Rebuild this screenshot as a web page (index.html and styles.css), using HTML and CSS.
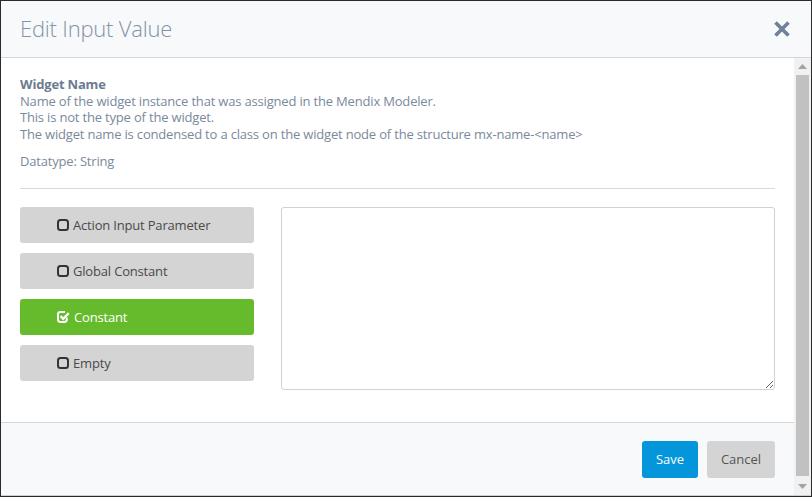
FILE: index.html
```html
<!DOCTYPE html>
<html>
<head>
<meta charset="utf-8">
<link rel="stylesheet" href="styles.css">
</head>
<body>
<div class="modal">
  <div class="modal-header">
    <h1 class="title">Edit Input Value</h1>
    <button class="close" aria-label="Close">
      <svg width="18" height="18" viewBox="0 0 18 18"><path d="M2.5 2.5 L15.5 15.5 M15.5 2.5 L2.5 15.5" stroke="#6e8197" stroke-width="3.6" stroke-linecap="butt" fill="none"/></svg>
    </button>
  </div>
  <div class="main">
    <div class="scroller">
      <div class="modal-body">
        <p class="desc"><strong>Widget Name</strong><br>Name of the widget instance that was assigned in the Mendix Modeler.<br>This is not the type of the widget.<br>The widget name is condensed to a class on the widget node of the structure mx-name-&lt;name&gt;</p>
        <p class="datatype">Datatype: String</p>
        <hr class="sep">
        <div class="editor">
          <div class="options">
            <button class="opt"><svg class="box" width="12" height="12" viewBox="0 0 12 12"><rect x="1" y="1" width="10" height="10" rx="2.5" fill="none" stroke="#333" stroke-width="2"/></svg>Action Input Parameter</button>
            <button class="opt"><svg class="box" width="12" height="12" viewBox="0 0 12 12"><rect x="1" y="1" width="10" height="10" rx="2.5" fill="none" stroke="#333" stroke-width="2"/></svg>Global Constant</button>
            <button class="opt active"><svg class="box" width="13" height="12" viewBox="0 0 13 12"><path d="M9.8 6.5 V8.6 Q9.8 11 7.4 11 H3.4 Q1 11 1 8.6 V3.4 Q1 1 3.4 1 H8" fill="none" stroke="#fff" stroke-width="2"/><path d="M3.6 5.2 L6.2 7.8 L11.8 2.2" fill="none" stroke="#fff" stroke-width="2.4"/></svg>Constant</button>
            <button class="opt"><svg class="box" width="12" height="12" viewBox="0 0 12 12"><rect x="1" y="1" width="10" height="10" rx="2.5" fill="none" stroke="#333" stroke-width="2"/></svg>Empty</button>
          </div>
          <textarea class="value"></textarea>
        </div>
      </div>
      <div class="modal-footer">
        <button class="btn save">Save</button>
        <button class="btn cancel">Cancel</button>
      </div>
    </div>
    <div class="scrollbar" aria-hidden="true">
      <div class="sb-btn"><svg width="9" height="5" viewBox="0 0 9 5"><path d="M0 5 L4.5 0 L9 5 Z" fill="#a3a3a3"/></svg></div>
      <div class="sb-track"><div class="sb-thumb"></div></div>
      <div class="sb-btn"><svg width="9" height="5" viewBox="0 0 9 5"><path d="M0 0 L9 0 L4.5 5 Z" fill="#a3a3a3"/></svg></div>
    </div>
  </div>
</div>
</body>
</html>
```
FILE: styles.css
```css
html, body {
  margin: 0;
  padding: 0;
  width: 812px;
  height: 497px;
  overflow: hidden;
  background: #fff;
}
* { box-sizing: border-box; }
.modal {
  width: 812px;
  height: 497px;
  border: 1px solid #2b2b2b;
  display: flex;
  flex-direction: column;
  font-family: "Open Sans", "Liberation Sans", sans-serif;
  font-size: 13px;
  letter-spacing: -0.18px;
  background: #fff;
}
.modal-header {
  height: 57px;
  flex: none;
  background: #f8f9fb;
  border-bottom: 1px solid #d4d6d9;
  display: flex;
  align-items: center;
  justify-content: space-between;
  padding: 0 20px 0 19px;
}
.title {
  margin: 0;
  font-size: 22px;
  font-weight: 300;
  color: #8394a8;
  letter-spacing: -0.2px;
  padding-bottom: 2px;
}
.close {
  border: 0;
  background: none;
  padding: 0;
  width: 18px;
  height: 18px;
  display: flex;
}
.main {
  flex: 1;
  display: flex;
  min-height: 0;
  border-bottom: 1px solid #d0d0d0;
}
.scroller {
  flex: 1;
  overflow: hidden;
  background: #f8f9fb;
}
.scrollbar {
  width: 17px;
  flex: none;
  display: flex;
  flex-direction: column;
  background: #f1f1f1;
}
.sb-btn {
  height: 17px;
  flex: none;
  display: flex;
  align-items: center;
  justify-content: center;
}
.sb-track {
  flex: 1;
  padding: 0 2px 2px 2px;
  display: flex;
}
.sb-thumb {
  flex: 1;
  background: #c1c1c1;
}
.modal-body {
  padding: 18px 19px 32px 19px;
  border-bottom: 1px solid #d4d6d9;
  color: #7a899c;
  background: #fff;
}
.desc {
  margin: 0;
  line-height: 16.7px;
}
.desc strong { color: #6c7b8f; font-weight: 700; }
.datatype {
  margin: 10px 0 0;
  line-height: 17px;
}
.sep {
  border: 0;
  border-top: 1px solid #d9dadd;
  margin: 18px 0 18px;
}
.editor {
  display: grid;
  grid-template-columns: 234px 1fr;
  column-gap: 27px;
  align-items: start;
}
.options {
  display: flex;
  flex-direction: column;
  gap: 10px;
}
.opt {
  height: 36px;
  border: 0;
  border-radius: 3px;
  background: #d4d4d4;
  color: #4a4a4a;
  font-family: "Open Sans", "Liberation Sans", sans-serif;
  font-size: 13px;
  letter-spacing: -0.18px;
  text-align: left;
  padding: 0 0 0 37px;
  display: flex;
  align-items: center;
  gap: 4px;
}
.opt.active {
  background: #66bb2c;
  color: #fff;
}
.box { flex: none; }
.value {
  height: 183px;
  width: 100%;
  border: 1px solid #cfd2d6;
  border-radius: 3px;
  resize: vertical;
  display: block;
  margin: 0;
}
.modal-footer {
  background: #f8f9fb;
  display: flex;
  justify-content: flex-end;
  gap: 9px;
  padding: 18px 19px 18px;
}
.btn {
  height: 37px;
  border: 0;
  border-radius: 3px;
  font-family: "Open Sans", "Liberation Sans", sans-serif;
  font-size: 13px;
  padding: 0;
}
.save { background: #0595db; color: #fff; width: 56px; }
.cancel { background: #d4d4d4; color: #555; width: 68px; }
```
